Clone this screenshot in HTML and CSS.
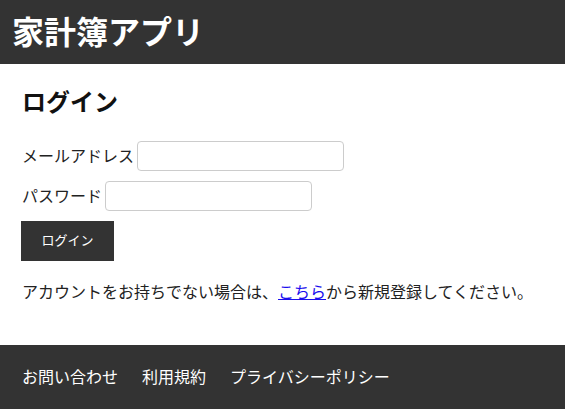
FILE: index.html
```html
<!DOCTYPE html>
<html lang="ja">
<head>
<meta charset="utf-8">
<title>家計簿アプリ</title>
<link rel="stylesheet" href="styles.css">
</head>
<body>
<header class="site-header">
  <h1 class="site-title">家計簿アプリ</h1>
</header>
<main class="main">
  <h2 class="page-title">ログイン</h2>
  <form class="login-form">
    <div class="form-row">
      <label class="form-label" for="email">メールアドレス</label>
      <input class="form-input" id="email" type="email">
    </div>
    <div class="form-row">
      <label class="form-label" for="password">パスワード</label>
      <input class="form-input" id="password" type="password">
    </div>
    <button class="btn" type="submit">ログイン</button>
  </form>
  <p class="note">アカウントをお持ちでない場合は、<a class="link" href="#">こちら</a>から新規登録してください。</p>
</main>
<footer class="site-footer">
  <nav class="footer-nav">
    <a class="footer-link" href="#">お問い合わせ</a>
    <a class="footer-link" href="#">利用規約</a>
    <a class="footer-link" href="#">プライバシーポリシー</a>
  </nav>
</footer>
</body>
</html>
```
FILE: styles.css
```css
* { box-sizing: border-box; }
html, body { margin: 0; padding: 0; background: #fff; }
body {
  font-family: "Noto Sans CJK JP", "Noto Sans", sans-serif;
  font-size: 16px;
  color: #222;
}
.site-header {
  background: #333;
  height: 64px;
  padding: 0 12px;
  display: flex;
  align-items: center;
}
.site-title {
  margin: 0;
  font-size: 32px;
  line-height: 40px;
  font-weight: 700;
  color: #fff;
  margin-top: -4px;
}
.main {
  padding: 19px 21px 42px;
}
.page-title {
  margin: 0 0 0 1px;
  font-size: 24px;
  line-height: 36px;
  font-weight: 700;
  color: #111;
}
.login-form {
  margin-top: 22px;
  display: flex;
  flex-direction: column;
  align-items: flex-start;
  gap: 10px;
}
.form-row {
  display: flex;
  align-items: center;
  gap: 3px;
  padding-left: 1px;
}
.form-label {
  font-size: 16px;
  line-height: 30px;
  color: #222;
  margin-top: -2px;
}
.form-input {
  width: 207px;
  height: 30px;
  border: 1px solid #ccc;
  border-radius: 4px;
  padding: 0 6px;
  font: inherit;
  background: #fff;
}
.btn {
  width: 93px;
  height: 40px;
  border: 0;
  background: #333;
  color: #fff;
  font-family: inherit;
  font-size: 13px;
  cursor: pointer;
  padding: 0 0 3px;
}
.note {
  margin: 18px 0 0 1px;
  line-height: 24px;
  font-size: 16px;
  color: #222;
}
.link { color: #1a0dee; }
.site-footer {
  background: #333;
  height: 64px;
  padding: 0 22px 2px;
  display: flex;
  align-items: center;
}
.footer-nav {
  display: flex;
  gap: 24px;
}
.footer-link {
  color: #fff;
  text-decoration: none;
  font-size: 16px;
  line-height: 24px;
}
```
